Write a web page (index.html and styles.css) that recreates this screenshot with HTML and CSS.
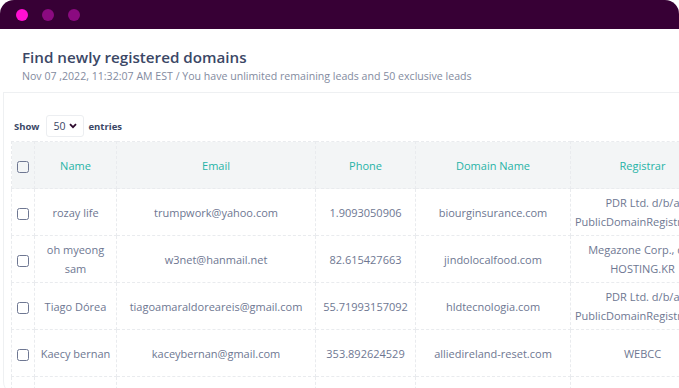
FILE: index.html
```html
<!DOCTYPE html>
<html>
<head>
<meta charset="utf-8">
<link rel="stylesheet" href="styles.css">
</head>
<body>
<div class="frame">
  <div class="topbar">
    <span class="dot dot-on"></span>
    <span class="dot"></span>
    <span class="dot"></span>
  </div>
  <div class="head">
    <h1 class="title">Find newly registered domains</h1>
    <p class="sub">Nov 07 ,2022, 11:32:07 AM EST / You have unlimited remaining leads and 50 exclusive leads</p>
  </div>
  <div class="panel">
    <div class="length">
      <span>Show</span>
      <span class="select">50 <svg width="8" height="6" viewBox="0 0 8 6"><path d="M1 1.2 L4 4.2 L7 1.2" fill="none" stroke="#2d0a2e" stroke-width="1.8"/></svg></span>
      <span>entries</span>
    </div>
    <table class="grid">
      <colgroup>
        <col class="c0"><col class="c1"><col class="c2"><col class="c3"><col class="c4"><col class="c5">
      </colgroup>
      <thead>
        <tr><th><span class="cb"></span></th><th>Name</th><th>Email</th><th>Phone</th><th>Domain Name</th><th>Registrar</th></tr>
      </thead>
      <tbody>
        <tr><td><span class="cb"></span></td><td>rozay life</td><td>trumpwork@yahoo.com</td><td>1.9093050906</td><td>biourginsurance.com</td><td class="reg">PDR Ltd. d/b/a<br>PublicDomainRegistry.com</td></tr>
        <tr><td><span class="cb"></span></td><td>oh myeong<br>sam</td><td>w3net@hanmail.net</td><td>82.615427663</td><td>jindolocalfood.com</td><td class="reg">Megazone Corp., dba<br>HOSTING.KR</td></tr>
        <tr><td><span class="cb"></span></td><td>Tiago Dórea</td><td>tiagoamaraldoreareis@gmail.com</td><td>55.71993157092</td><td>hldtecnologia.com</td><td class="reg">PDR Ltd. d/b/a<br>PublicDomainRegistry.com</td></tr>
        <tr><td><span class="cb"></span></td><td>Kaecy bernan</td><td>kaceybernan@gmail.com</td><td>353.892624529</td><td>alliedireland-reset.com</td><td class="reg">WEBCC</td></tr>
        <tr><td><span class="cb"></span></td><td>&nbsp;</td><td>&nbsp;</td><td>&nbsp;</td><td>&nbsp;</td><td>&nbsp;</td></tr>
      </tbody>
    </table>
  </div>
</div>
</body>
</html>
```
FILE: styles.css
```css
html, body {
  margin: 0;
  padding: 0;
  background: #ffffff;
  overflow: hidden;
  width: 679px;
  height: 388px;
}
body {
  font-family: "Open Sans", "Liberation Sans", sans-serif;
}
.frame {
  width: 679px;
  height: 388px;
  overflow: hidden;
}
.topbar {
  height: 29px;
  background: #370035;
  border-radius: 14px 14px 0 0;
  display: flex;
  align-items: center;
  gap: 14px;
  padding-left: 16px;
  box-sizing: border-box;
}
.dot {
  width: 12px;
  height: 12px;
  border-radius: 50%;
  background: #8b0a80;
}
.dot-on {
  background: #ff0fd2;
}
.head {
  padding: 18px 0 0 22px;
  height: 63px;
  box-sizing: border-box;
}
.title {
  margin: 0;
  font-size: 15.2px;
  font-weight: 600;
  color: #3b4766;
  line-height: 21px;
}
.sub {
  margin: 1px 0 0;
  font-size: 10.6px;
  color: #838ba0;
  line-height: 14px;
}
.panel {
  margin-left: 3px;
  border-top: 1px solid #eef0f2;
  border-left: 1px solid #eef0f2;
  border-bottom-left-radius: 14px;
  padding: 22px 0 0 7px;
  height: 280px;
}
.length {
  display: flex;
  align-items: center;
  gap: 5px;
  font-size: 9.5px;
  font-weight: 700;
  color: #3b4766;
  padding-left: 3px;
  height: 22px;
}
.select {
  display: inline-flex;
  align-items: center;
  justify-content: space-between;
  width: 38px;
  height: 22px;
  box-sizing: border-box;
  border: 1px solid #eceef1;
  border-radius: 3px;
  padding: 0 6px 0 7px;
  font-weight: 400;
  font-size: 10.5px;
  color: #3b4766;
  margin: 0 0 0 1px;
}
.grid {
  margin-top: 4px;
  border-collapse: collapse;
  table-layout: fixed;
  width: 703px;
  font-size: 11px;
  color: #6e7792;
}
.c0 { width: 23px; }
.c1 { width: 82px; }
.c2 { width: 199px; }
.c3 { width: 100px; }
.c4 { width: 155px; }
.c5 { width: 144px; }
.grid th, .grid td {
  border: 1px dashed #e9ebee;
  text-align: center;
  vertical-align: middle;
  padding: 0 4px;
  line-height: 19px;
}
.grid th {
  height: 46px;
  background: #f3f5f6;
  color: #27b3a6;
  font-weight: 400;
}
.grid td {
  height: 46px;
}
.grid th:first-child, .grid td:first-child {
  padding: 0;
}
.grid td.reg {
  white-space: nowrap;
  overflow: hidden;
}
.cb {
  display: inline-block;
  width: 10px;
  height: 10px;
  border: 1px solid #6e7792;
  border-radius: 2.5px;
  vertical-align: middle;
}
```
